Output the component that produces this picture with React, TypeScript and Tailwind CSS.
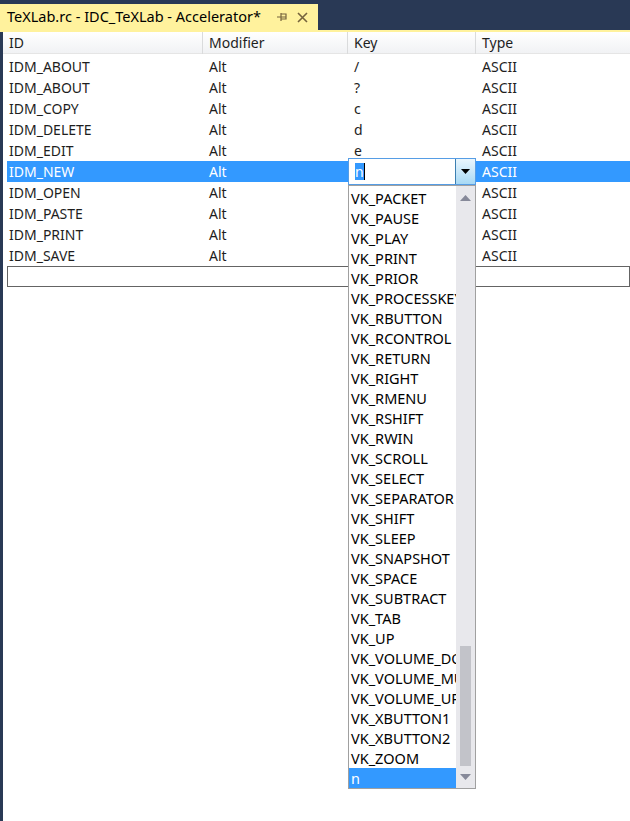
import React from "react";

const rows = [
  ["IDM_ABOUT", "Alt", "/", "ASCII"],
  ["IDM_ABOUT", "Alt", "?", "ASCII"],
  ["IDM_COPY", "Alt", "c", "ASCII"],
  ["IDM_DELETE", "Alt", "d", "ASCII"],
  ["IDM_EDIT", "Alt", "e", "ASCII"],
  ["IDM_NEW", "Alt", "", "ASCII"],
  ["IDM_OPEN", "Alt", "", "ASCII"],
  ["IDM_PASTE", "Alt", "", "ASCII"],
  ["IDM_PRINT", "Alt", "", "ASCII"],
  ["IDM_SAVE", "Alt", "", "ASCII"],
];

const keys = [
  "VK_PACKET",
  "VK_PAUSE",
  "VK_PLAY",
  "VK_PRINT",
  "VK_PRIOR",
  "VK_PROCESSKEY",
  "VK_RBUTTON",
  "VK_RCONTROL",
  "VK_RETURN",
  "VK_RIGHT",
  "VK_RMENU",
  "VK_RSHIFT",
  "VK_RWIN",
  "VK_SCROLL",
  "VK_SELECT",
  "VK_SEPARATOR",
  "VK_SHIFT",
  "VK_SLEEP",
  "VK_SNAPSHOT",
  "VK_SPACE",
  "VK_SUBTRACT",
  "VK_TAB",
  "VK_UP",
  "VK_VOLUME_DOWN",
  "VK_VOLUME_MUTE",
  "VK_VOLUME_UP",
  "VK_XBUTTON1",
  "VK_XBUTTON2",
  "VK_ZOOM",
  "n",
];

function KeyDropdown() {
  return (
    <div className="absolute left-[345px] top-[126px] w-[128px]">
      {/* combo box */}
      <div className="flex h-[27px] border border-[#569de5] bg-white">
        <div className="flex flex-1 items-center pl-[6px]">
          <span className="bg-[#3399ff] leading-[17px] text-white">n</span>
          <span className="h-[17px] w-px bg-black" />
        </div>
        <div className="flex w-[20px] items-center justify-center border-l border-[#3c7fb1] bg-gradient-to-b from-[#eaf6fd] to-[#a7d9f5]">
          <svg width="9" height="5" viewBox="0 0 9 5">
            <path d="M0 0h9L4.5 5z" fill="#000" />
          </svg>
        </div>
      </div>
      {/* list */}
      <div className="flex h-[604px] border border-[#a0a0a0] bg-white">
        <div className="flex min-w-0 flex-1 flex-col overflow-hidden pt-[2px]">
          {keys.map((k, i) => (
            <div
              key={k}
              className={
                "h-[20px] overflow-hidden whitespace-nowrap pl-[2px] text-[14.5px] leading-[20px] " +
                (i === keys.length - 1 ? "bg-[#3399ff] text-white" : "text-black")
              }
            >
              {k}
            </div>
          ))}
        </div>
        <div className="flex w-[19px] flex-col items-center bg-[#e8e8ec]">
          <div className="flex h-[22px] items-center justify-center pt-[2px]">
            <svg width="11" height="6" viewBox="0 0 11 6">
              <path d="M0 6h11L5.5 0z" fill="#868999" />
            </svg>
          </div>
          <div className="flex-1" />
          <div className="h-[120px] w-[11px] bg-[#c2c3c9]" />
          <div className="flex h-[22px] items-center justify-center">
            <svg width="11" height="6" viewBox="0 0 11 6">
              <path d="M0 0h11L5.5 6z" fill="#868999" />
            </svg>
          </div>
        </div>
      </div>
    </div>
  );
}

export default function App() {
  return (
    <div
      className="flex h-[821px] w-[630px] flex-col overflow-hidden bg-[#293955] text-[14px]"
      style={{ fontFamily: '"Noto Sans", "Open Sans", sans-serif' }}
    >
      {/* tab strip */}
      <div className="flex h-[30px] items-end">
        <div className="flex h-[26px] w-[318px] items-center bg-[#fff29d] pl-[7px] pr-[10px] text-[#000]">
          <span className="flex-1 whitespace-nowrap text-[14.5px]">TeXLab.rc - IDC_TeXLab - Accelerator*</span>
          <svg width="12" height="12" viewBox="0 0 12 12" className="mr-[9px]">
            <path d="M1 6h4M5 2v8M5 3h5v5H5M5 6h5" stroke="#75633d" strokeWidth="1.2" fill="none" />
          </svg>
          <svg width="11" height="11" viewBox="0 0 11 11">
            <path d="M1 1l9 9M10 1l-9 9" stroke="#75633d" strokeWidth="1.6" />
          </svg>
        </div>
      </div>
      <div className="h-[2px] bg-[#fff29d]" />
      <div className="flex flex-1 pl-[3px]">
        <div className="relative flex-1 bg-white">
          {/* header */}
          <div className="flex h-[22px] items-center border-b border-[#e5e5e5] bg-gradient-to-b from-white to-[#f1f2f4] text-[#1e1e1e]">
            <div className="w-[200px] border-r border-[#dadbdc] pl-[6px] leading-[22px]">ID</div>
            <div className="w-[145px] border-r border-[#dadbdc] pl-[6px] leading-[22px]">Modifier</div>
            <div className="w-[128px] border-r border-[#dadbdc] pl-[6px] leading-[22px]">Key</div>
            <div className="flex-1 pl-[6px] leading-[22px]">Type</div>
          </div>
          {/* rows */}
          <div className="pl-[4px] pt-[2px]">
            {rows.map((r, i) => (
              <div
                key={i}
                className={
                  "flex h-[21px] items-center " +
                  (i === 5 ? "bg-[#3399ff] text-white" : "text-[#1e1e1e]")
                }
              >
                <div className="w-[195px] pl-[2px]">{r[0]}</div>
                <div className="w-[145px] pl-[7px]">{r[1]}</div>
                <div className="w-[128px] pl-[7px]">{r[2]}</div>
                <div className="flex-1 pl-[7px]">{r[3]}</div>
              </div>
            ))}
            <div className="h-[21px] border border-[#646464]" />
          </div>
          <KeyDropdown />
        </div>
      </div>
    </div>
  );
}
